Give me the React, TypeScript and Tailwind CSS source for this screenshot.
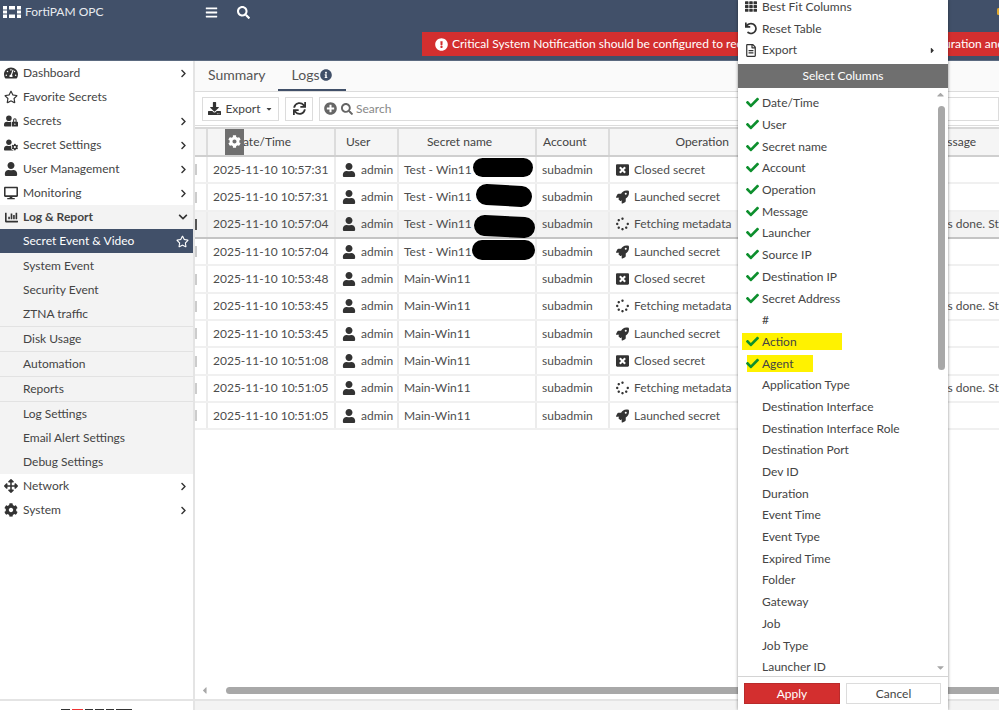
import {
  FaBars,
  FaCaretDown,
  FaCaretRight,
  FaCaretUp,
  FaCaretLeft,
  FaChartBar,
  FaCheck,
  FaChevronDown,
  FaChevronRight,
  FaCog,
  FaDesktop,
  FaDownload,
  FaExclamationCircle,
  FaInfoCircle,
  FaPlusCircle,
  FaRegFileAlt,
  FaRegStar,
  FaRocket,
  FaSearch,
  FaSpinner,
  FaSync,
  FaTachometerAlt,
  FaTh,
  FaUndo,
  FaUser,
  FaUserCog,
  FaUserLock,
  FaWindowClose,
  FaArrowsAlt,
} from "react-icons/fa";
import type { ReactNode } from "react";

const navTop = [
  { label: "Dashboard", icon: <FaTachometerAlt />, arrow: true },
  { label: "Favorite Secrets", icon: <FaRegStar />, arrow: false },
  { label: "Secrets", icon: <FaUserLock />, arrow: true },
  { label: "Secret Settings", icon: <FaUserCog />, arrow: true },
  { label: "User Management", icon: <FaUser />, arrow: true },
  { label: "Monitoring", icon: <FaDesktop />, arrow: true },
];

const closed = { label: "Closed secret", icon: <FaWindowClose /> };
const launched = { label: "Launched secret", icon: <FaRocket /> };
const fetching = { label: "Fetching metadata", icon: <FaSpinner /> };

const rows = [
  { time: "2025-11-10 10:57:31", name: "Test - Win11", op: closed },
  { time: "2025-11-10 10:57:31", name: "Test - Win11", op: launched },
  { time: "2025-11-10 10:57:04", name: "Test - Win11", op: fetching, active: true },
  { time: "2025-11-10 10:57:04", name: "Test - Win11", op: launched },
  { time: "2025-11-10 10:53:48", name: "Main-Win11", op: closed },
  { time: "2025-11-10 10:53:45", name: "Main-Win11", op: fetching },
  { time: "2025-11-10 10:53:45", name: "Main-Win11", op: launched },
  { time: "2025-11-10 10:51:08", name: "Main-Win11", op: closed },
  { time: "2025-11-10 10:51:05", name: "Main-Win11", op: fetching },
  { time: "2025-11-10 10:51:05", name: "Main-Win11", op: launched },
];

const columns = [
  { label: "Date/Time", checked: true },
  { label: "User", checked: true },
  { label: "Secret name", checked: true },
  { label: "Account", checked: true },
  { label: "Operation", checked: true },
  { label: "Message", checked: true },
  { label: "Launcher", checked: true },
  { label: "Source IP", checked: true },
  { label: "Destination IP", checked: true },
  { label: "Secret Address", checked: true },
  { label: "#", checked: false },
  { label: "Action", checked: true, mark: "w-[100px] -ml-[20px] pl-[20px]" },
  { label: "Agent", checked: true, mark: "w-[66px] -ml-[15px] pl-[15px]" },
  { label: "Application Type", checked: false },
  { label: "Destination Interface", checked: false },
  { label: "Destination Interface Role", checked: false },
  { label: "Destination Port", checked: false },
  { label: "Dev ID", checked: false },
  { label: "Duration", checked: false },
  { label: "Event Time", checked: false },
  { label: "Event Type", checked: false },
  { label: "Expired Time", checked: false },
  { label: "Folder", checked: false },
  { label: "Gateway", checked: false },
  { label: "Job", checked: false },
  { label: "Job Type", checked: false },
  { label: "Launcher ID", checked: false },
];

const gridCols = "grid grid-cols-[13px_128px_63px_138px_73px_131px_440px]";

function NavItem({ icon, label, arrow }: { icon?: ReactNode; label: string; arrow?: boolean }) {
  return (
    <div className="flex h-6 items-center text-[#444]">
      <span className="flex w-[23px] justify-center pr-[1px] text-[14px] text-[#333]">{icon}</span>
      <span className="flex-1">{label}</span>
      {arrow && <FaChevronRight className="mr-[5px] text-[9px] text-[#333]" />}
    </div>
  );
}

function SubItem({ label, className = "h-6" }: { label: string; className?: string }) {
  return <div className={`flex items-center pl-[23px] text-[#444] ${className}`}>{label}</div>;
}

function Sidebar() {
  return (
    <aside className="flex w-[195px] shrink-0 flex-col border-r-2 border-[#e4e4e4] bg-white">
      {navTop.map((item) => (
        <NavItem key={item.label} {...item} />
      ))}
      <div className="flex h-6 items-center bg-[#f3f3f3] font-bold text-[#444]">
        <span className="flex w-[23px] justify-center pr-[1px] text-[13px] text-[#333]">
          <FaChartBar />
        </span>
        <span className="flex-1">Log &amp; Report</span>
        <FaChevronDown className="mr-[5px] text-[10px] text-[#333]" />
      </div>
      <div className="flex h-6 items-center bg-[#415069] pl-[23px] text-white">
        <span className="flex-1">Secret Event &amp; Video</span>
        <FaRegStar className="mr-[4px] text-[13px]" />
      </div>
      <div className="flex flex-col bg-[#f3f3f3] pt-px">
        <SubItem label="System Event" />
        <SubItem label="Security Event" />
        <SubItem label="ZTNA traffic" />
        <SubItem label="Disk Usage" className="h-[25px] border-t border-[#e2e2e2]" />
        <SubItem label="Automation" className="h-[25px] border-t border-[#e2e2e2]" />
        <SubItem label="Reports" className="h-[25px] border-t border-[#e2e2e2]" />
        <SubItem label="Log Settings" className="h-[25px] border-t border-[#e2e2e2]" />
        <SubItem label="Email Alert Settings" />
        <SubItem label="Debug Settings" />
      </div>
      <NavItem label="Network" icon={<FaArrowsAlt />} arrow />
      <NavItem label="System" icon={<FaCog />} arrow />
      <div className="mt-auto flex h-[11px] justify-center gap-[2px] border-t-2 border-[#e4e4e4] pt-[8px]">
        <span className="h-[1px] w-[9px] bg-[#333]" />
        <span className="h-[1px] w-[11px] bg-[#e33]" />
        <span className="h-[1px] w-[8px] bg-[#333]" />
        <span className="h-[1px] w-[9px] bg-[#333]" />
        <span className="h-[1px] w-[8px] bg-[#333]" />
        <span className="h-[1px] w-[16px] bg-[#333]" />
      </div>
    </aside>
  );
}

function LogTable() {
  return (
    <div className="overflow-hidden border-t-2 border-[#d8d8d8]">
      <div className={`${gridCols} relative h-[28px] border-b-2 border-[#cfcfcf] bg-[#f5f5f5] text-[#444]`}>
        <div className="border-r-2 border-[#dcdcdc]" />
        <div className="border-r-2 border-[#dcdcdc] pl-[26px] leading-[26px]">Date/Time</div>
        <div className="border-r-2 border-[#dcdcdc] pl-[10px] leading-[26px]">User</div>
        <div className="border-r-2 border-[#dcdcdc] pr-[15px] text-center leading-[26px]">Secret name</div>
        <div className="border-r-2 border-[#dcdcdc] pl-[6px] leading-[26px]">Account</div>
        <div className="pr-[12px] text-right leading-[26px]">Operation</div>
        <div className="pl-[189px] leading-[26px]">Message</div>
        <div className="absolute left-[30px] top-[-2px] flex h-[28px] w-[19px] items-center justify-center bg-[#6f6f6f] text-[13px] text-white">
          <FaCog />
        </div>
      </div>
      {rows.map((row, i) => (
        <div
          key={i}
          className={`${gridCols} h-[27.35px] whitespace-nowrap border-b-2 ${
            row.active ? "border-[#c4c4c4] bg-[#f3f3f3]" : "border-[#f0f0f0] bg-white"
          }`}
        >
          <div className="flex items-center border-r-2 border-[#ececec]">
            <span className={`h-[11px] w-[2px] ${row.active ? "bg-[#555]" : "bg-[#ccc]"}`} />
          </div>
          <div className="flex items-center border-r-2 border-[#ececec] pl-[5px]">{row.time}</div>
          <div className="flex items-center gap-[5px] border-r-2 border-[#ececec] pl-[6px]">
            <FaUser className="text-[14px] text-[#333]" />
            admin
          </div>
          <div className="flex items-center border-r-2 border-[#ececec] pl-[5px]">{row.name}</div>
          <div className="flex items-center border-r-2 border-[#ececec] pl-[5px]">subadmin</div>
          <div className="flex items-center gap-[5px] pl-[6px]">
            <span className="flex w-[13px] justify-center text-[14px] text-[#333]">{row.op.icon}</span>
            {row.op.label}
          </div>
          <div className="flex items-center pl-[25px]">
            {row.op === fetching ? "Fetching secret metadata process is done. Status: OK" : ""}
          </div>
        </div>
      ))}
    </div>
  );
}

function ColumnMenu() {
  return (
    <div className="absolute right-[51px] top-0 flex h-[710px] w-[210px] flex-col bg-white text-[#444] shadow-[0_0_3px_rgba(0,0,0,0.45)]">
      <div className="-mt-[4px] flex h-[64px] flex-col pl-[7px] leading-[21.7px]">
        <div className="flex items-center gap-[5px]">
          <FaTh className="w-[12px] text-[13px] text-[#333]" /> Best Fit Columns
        </div>
        <div className="flex items-center gap-[5px]">
          <FaUndo className="w-[12px] text-[13px] text-[#333]" /> Reset Table
        </div>
        <div className="flex items-center gap-[5px]">
          <FaRegFileAlt className="w-[12px] text-[13px] text-[#333]" />
          <span className="flex-1">Export</span>
          <FaCaretRight className="mr-[11px] text-[9px] text-[#333]" />
        </div>
      </div>
      <div className="mt-[4px] flex h-[24px] items-center justify-center bg-[#6f6f6f] text-white">Select Columns</div>
      <div className="relative flex-1 overflow-hidden pl-[8px] pt-[4px]">
        {columns.map((col) => (
          <div key={col.label} className="flex h-[21.7px] items-center">
            <span className="flex w-[16px] shrink-0 justify-start">
              {col.checked && <FaCheck className="relative z-10 text-[13px] text-[#0d8f2d]" />}
            </span>
            <span className={`py-[1px] leading-[15px] ${col.mark ? `bg-[#fff200] ${col.mark}` : ""}`}>{col.label}</span>
          </div>
        ))}
        <FaCaretUp className="absolute right-[2px] top-[1px] text-[11px] text-[#a8a8a8]" />
        <div className="absolute right-[3px] top-[18px] h-[264px] w-[7px] rounded-full bg-[#a8a8a8]" />
        <FaCaretDown className="absolute right-[2px] top-[574px] text-[11px] text-[#a8a8a8]" />
      </div>
      <div className="flex h-[34px] shrink-0 gap-[6px] border-t border-[#d4d4d4] px-[6px] pt-[6px]">
        <button className="h-[21px] w-[96px] border border-[#b92b2b] bg-[#d32f2f] text-white">Apply</button>
        <button className="h-[21px] w-[95px] border border-[#dcdcdc] bg-white text-[#444]">Cancel</button>
      </div>
    </div>
  );
}

export default function App() {
  return (
    <div className="relative flex h-[710px] w-[999px] flex-col overflow-hidden bg-white font-['Lato',sans-serif] text-[12px] text-[#4d4d4d]">
      <header className="relative h-[61px] shrink-0 border-b border-[#5b6a80] bg-[#415069] text-white">
        <div className="flex h-6 items-center">
          <svg viewBox="0 0 18 12" className="ml-[3px] h-[12px] w-[18px]" fill="white">
            <path d="M0 0h4v3.4H0zM6 0h6v3.4H6zM14 0h4v3.4h-4zM0 4.4h4v3.2H0zM14 4.4h4v3.2h-4zM0 8.6h4V12H0zM6 8.6h6V12H6zM14 8.6h4V12h-4z" />
          </svg>
          <span className="ml-[4px] w-[180px] text-[#e8ebef]">FortiPAM OPC</span>
          <FaBars className="text-[13px]" />
          <FaSearch className="ml-[19px] text-[13px]" />
        </div>
        <div className="absolute left-[422px] top-[32px] flex h-[24px] w-[577px] items-center overflow-hidden whitespace-nowrap bg-[#d32f2f] pl-[13px]">
          <FaExclamationCircle className="mr-[4px] shrink-0 text-[13px]" />
          <span className="shrink-0">
            Critical System Notification should be configured to receive FortiPAM system event log configuration and
          </span>
        </div>
        <span className="absolute left-[997px] top-[8px] h-[7px] w-[3px] rounded-sm bg-[#e0a92e]" />
      </header>
      <div className="flex min-h-0 flex-1">
        <Sidebar />
        <main className="relative flex min-w-0 flex-1 flex-col bg-white">
          <div className="flex h-[31px] items-end border-b border-[#dcdcdc] bg-[#fafafa] text-[14px] text-[#555]">
            <div className="ml-[13px] flex h-[29px] items-start pt-[2px]">Summary</div>
            <div className="ml-[12px] flex h-[31px] items-center border-b-2 border-[#415069] px-[14px]">
              Logs <FaInfoCircle className="text-[12px] text-[#415069]" />
            </div>
          </div>
          <div className="flex h-[34px] items-center gap-[6px] border-b border-[#dcdcdc] pl-[7px]">
            <button className="flex h-[24px] w-[77px] items-center justify-center gap-[4px] border border-[#dcdcdc] text-[#444]">
              <FaDownload className="text-[13px] text-[#333]" /> Export
              <FaCaretDown className="text-[8px]" />
            </button>
            <button className="flex h-[24px] w-[28px] items-center justify-center border border-[#dcdcdc] text-[13px] text-[#333]">
              <FaSync />
            </button>
            <div className="flex h-[24px] flex-1 items-center gap-[3px] border border-[#dcdcdc] pl-[4px] text-[#888]">
              <FaPlusCircle className="mr-[1px] text-[13px] text-[#666]" />
              <FaSearch className="text-[12px] text-[#666]" />
              Search
            </div>
          </div>
          <div className="mt-[1px]">
            <LogTable />
          </div>
          <div className="mt-auto flex h-[10px] items-center pl-[4px]">
            <FaCaretLeft className="text-[11px] text-[#a8a8a8]" />
            <span className="ml-[16px] h-[7px] flex-1 rounded-l-full bg-[#a8a8a8]" />
          </div>
          <div className="mt-[4px] h-[11px] border-t-2 border-[#e4e4e4] bg-[#f3f3f3]" />
        </main>
      </div>
      <div className="absolute left-[473px] top-[158px] h-[19px] w-[60px] rounded-full bg-black" />
      <div className="absolute left-[476px] top-[185px] h-[21px] w-[56px] rotate-3 rounded-full bg-black" />
      <div className="absolute left-[474px] top-[216px] h-[21px] w-[61px] rotate-3 rounded-full bg-black" />
      <div className="absolute left-[472px] top-[240px] h-[20px] w-[63px] rounded-full bg-black" />
      <ColumnMenu />
    </div>
  );
}
